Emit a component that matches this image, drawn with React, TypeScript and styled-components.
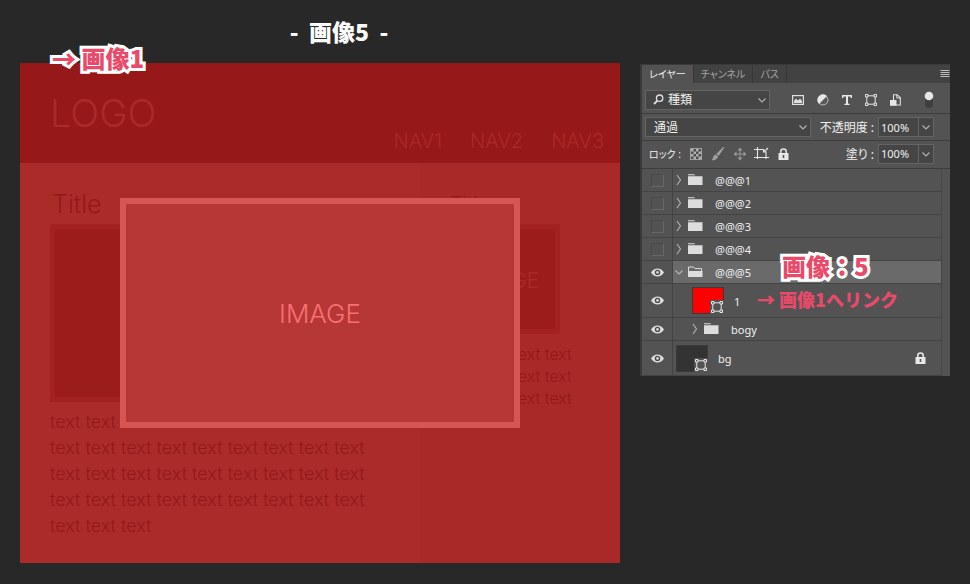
import React from "react";
import styled, { createGlobalStyle } from "styled-components";

const jp = `"Noto Sans CJK JP", "Noto Sans", sans-serif`;
const ui = `"Noto Sans", "Noto Sans CJK JP", sans-serif`;

const GlobalStyle = createGlobalStyle`
  *, *::before, *::after { box-sizing: border-box; }
  body { margin: 0; background: #282828; font-family: ${jp}; }
  h1, h2, h3, p, ul { margin: 0; padding: 0; font-weight: inherit; }
  button, input, select { font: inherit; color: inherit; margin: 0; padding: 0; border: 0; background: none; border-radius: 0; }
`;

const Page = styled.div`
  display: grid;
  grid-template-columns: minmax(0, 1fr) 310px;
  column-gap: 20px;
  align-items: start;
  padding: 18px 20px 20px;
`;

const Heading = styled.h1`
  padding-left: 38px;
  margin-bottom: 18px;
  color: #fff;
  font-size: 23px;
  font-weight: 900;
  line-height: 27px;
  text-align: center;
  white-space: pre;
`;

const Note = styled.span<{ $size: number; $outlined?: boolean }>`
  position: absolute;
  z-index: 2;
  color: #ea4a6a;
  font-family: ${jp};
  font-size: ${(p) => p.$size}px;
  font-weight: 900;
  line-height: 26px;
  white-space: pre;
  ${(p) =>
    p.$outlined &&
    `-webkit-text-stroke: 6px #fff; paint-order: stroke fill; stroke-linejoin: round;`}
`;

const BoardNote = styled(Note)`
  left: 32px;
  top: -18px;
`;

const GroupNote = styled(Note)`
  left: 109px;
  top: -8px;
`;

const LinkNote = styled(Note)`
  left: 84px;
  top: 2px;
`;

/* ---------- Artboard ---------- */

const Artboard = styled.section`
  position: relative;
  min-height: 500px;
  background: #ab2b2b;
  color: #951818;
  font-family: Inter, sans-serif;
  font-weight: 300;
  display: flex;
  flex-direction: column;
`;

const BoardHeader = styled.header`
  display: flex;
  justify-content: space-between;
  align-items: flex-end;
  height: 100px;
  padding: 0 16px 0 30px;
  background: #971818;
  color: #aa2929;
`;

const Logo = styled.h2`
  align-self: flex-start;
  padding-top: 20px;
  font-size: 38px;
  line-height: 60px;
`;

const Nav = styled.nav`
  display: flex;
  gap: 28px;
  padding-bottom: 8px;
`;

const NavLink = styled.a`
  color: inherit;
  font-size: 20px;
  line-height: 28px;
  text-decoration: none;
`;

const BoardBody = styled.div`
  display: grid;
  grid-template-columns: minmax(0, 2fr) minmax(0, 1fr);
  flex: 1;
`;

const MainColumn = styled.article`
  padding: 27px 30px 0;
`;

const SideColumn = styled.aside`
  padding: 27px 30px 0;
  background: #a92929;
`;

const Title = styled.h3<{ $small?: boolean }>`
  padding-left: ${(p) => (p.$small ? 0 : 2)}px;
  font-size: ${(p) => (p.$small ? 20 : 25)}px;
  line-height: 28px;
  margin-bottom: 6px;
`;

const Picture = styled.div<{ $w: string; $h: number }>`
  display: grid;
  place-items: center;
  width: ${(p) => p.$w};
  height: ${(p) => p.$h}px;
  padding-top: 2px;
  border: 5px solid #a32121;
  background: #9c1c1c;
  color: #aa2929;
  font-size: 22px;
`;

const MainText = styled.p`
  margin-top: 7px;
  font-size: 18px;
  line-height: 26px;
  white-space: pre;
`;

const SideText = styled.p`
  margin-top: 9px;
  font-size: 16px;
  line-height: 22px;
  white-space: pre;
`;

const Backdrop = styled.div`
  position: absolute;
  inset: 0;
  display: grid;
  place-items: center;
`;

const Modal = styled.div`
  display: grid;
  place-items: center;
  width: 400px;
  height: 230px;
  padding-top: 2px;
  border: 6px solid #d65555;
  background: #b73736;
  color: #f87070;
  font-size: 26px;
  line-height: 30px;
`;

/* ---------- Layers panel ---------- */

const Panel = styled.section`
  margin-top: 46px;
  border: 1px solid #3a3a3a;
  border-width: 1px 0 0 2px;
  background: #535353;
  color: #f0f0f0;
  font-family: ${ui};
  font-size: 11px;
`;

const TabBar = styled.div`
  display: flex;
  height: 18px;
  background: #424242;
`;

const Tab = styled.button<{ $active?: boolean }>`
  height: 18px;
  padding: 0 7px;
  border-right: 1px solid #383838;
  background: ${(p) => (p.$active ? "#535353" : "transparent")};
  color: ${(p) => (p.$active ? "#f0f0f0" : "#a5a5a5")};
  font-family: ${jp};
  font-size: 10px;
  font-feature-settings: "palt";
  line-height: 18px;
`;

const MenuButton = styled.button`
  margin-left: auto;
  width: 10px;
  height: 18px;
  display: grid;
  place-items: center;
`;

const ToolRow = styled.div<{ $h: number; $top?: number; $bottom?: number }>`
  display: flex;
  align-items: center;
  height: ${(p) => p.$h}px;
  padding: ${(p) => p.$top ?? 0}px 16px ${(p) => p.$bottom ?? 0}px 3px;
  border-bottom: 1px solid #3d3d3d;
`;

const SelectBox = styled.div<{ $w: number }>`
  position: relative;
  width: ${(p) => p.$w}px;
  height: 20px;
  border: 1px solid #646464;
  background: #454545;
  display: flex;
  align-items: center;
`;

const Select = styled.select<{ $indent: number }>`
  appearance: none;
  width: 100%;
  height: 18px;
  padding-left: ${(p) => p.$indent}px;
  font-size: 12px;
`;

const SelectGlyph = styled.span<{ $side: "left" | "right" }>`
  position: absolute;
  ${(p) => p.$side}: ${(p) => (p.$side === "left" ? 7 : 1)}px;
  display: flex;
  pointer-events: none;
`;

const FilterGroup = styled.div`
  display: flex;
  align-items: center;
  justify-content: space-between;
  width: 109px;
  margin-left: 22px;
`;

const IconButton = styled.button`
  display: flex;
`;

const LockGroup = styled.div`
  display: grid;
  grid-template-columns: repeat(5, 22px);
  place-items: center;
  margin-left: 4px;
`;

const Pusher = styled.div`
  margin-left: auto;
  display: flex;
  align-items: center;
`;

const FieldLabel = styled.label`
  margin-right: 4px;
  font-size: 12px;
  font-feature-settings: "palt";
  white-space: pre;
`;

const LockLabel = styled.span`
  padding-left: 4px;
  font-size: 10px;
  font-feature-settings: "palt";
`;

const NumberBox = styled.div`
  display: flex;
  width: 56px;
  height: 20px;
  border: 1px solid #646464;
  background: #454545;
`;

const NumberInput = styled.input`
  width: 39px;
  padding-left: 2px;
`;

const NumberArrow = styled.button`
  flex: 1;
  display: grid;
  place-items: center;
  border-left: 1px solid #646464;
`;

const LayerList = styled.ul`
  list-style: none;
  margin: 0 8px 0 1px;
  border-right: 1px solid #474747;
`;

const LayerRow = styled.li<{ $h: number }>`
  display: flex;
  height: ${(p) => p.$h}px;
  border-bottom: 1px solid #434343;
`;

const EyeCell = styled.button`
  display: grid;
  place-items: center;
  flex: none;
  width: 30px;
  border-right: 1px solid #434343;
`;

const EmptyEye = styled.span`
  width: 13px;
  height: 13px;
  margin-left: -1px;
  border: 1px solid #676767;
  border-color: #484848 #676767 #676767 #484848;
`;

const LayerContent = styled.div<{ $depth: number; $selected?: boolean }>`
  position: relative;
  display: flex;
  align-items: center;
  flex: 1;
  padding: 0 15px 0 ${(p) => 3 + p.$depth * 16}px;
  background: ${(p) => (p.$selected ? "#6a6a6a" : "transparent")};
`;

const Disclosure = styled.button`
  display: flex;
  margin: 0 3px 0 -3px;
`;

const LayerName = styled.span<{ $gap: number }>`
  margin-left: ${(p) => p.$gap}px;
  padding-top: 2px;
  line-height: 16px;
`;

const Thumb = styled.span<{ $fill: string }>`
  display: flex;
  justify-content: flex-end;
  align-items: flex-end;
  width: 32px;
  height: 27px;
  background: ${(p) => p.$fill};
  border: 1px solid #3a3a3a;
`;

const ShapeBadge = styled.span`
  display: flex;
  background: #535353;
  padding: 1px;
  margin: 0 -1px -1px 0;
`;

const LockMark = styled.span`
  display: flex;
  margin-left: auto;
`;

/* ---------- Icons ---------- */

const Chevron = ({ open = true }: { open?: boolean }) => (
  <svg width="12" height="12" viewBox="0 0 12 12" fill="none" stroke="#b4b4b4" strokeWidth="1.1">
    <path d={open ? "M2.5 4.5 L6 8 L9.5 4.5" : "M4 1 L7.5 6 L4 11"} />
  </svg>
);

const Folder = ({ open = false }: { open?: boolean }) => (
  <svg width="15" height="12" viewBox="0 0 15 12">
    {open ? (
      <>
        <path d="M0.5 10 V1 H5.5 L7 2.6 H13.5 V5" fill="none" stroke="#ddd" strokeWidth="1" />
        <path d="M0 5 H14.5 V11 H0 Z" fill="#ddd" />
      </>
    ) : (
      <path d="M0 0.3 H6 L7.5 1.3 H0 Z M0 2.2 H14.5 V11 H0 Z" fill="#ddd" />
    )}
  </svg>
);

const Eye = () => (
  <svg width="13" height="9" viewBox="0 0 13 9">
    <path d="M0 4.5 C3 -0.8 10 -0.8 13 4.5 C10 9.8 3 9.8 0 4.5 Z" fill="#dcdcdc" />
    <circle cx="6.5" cy="4.4" r="2.7" fill="#484848" />
    <circle cx="6.5" cy="4.4" r="1.3" fill="#dcdcdc" />
  </svg>
);

const ShapeIcon = () => (
  <svg width="12" height="12" viewBox="0 0 12 12" fill="none" stroke="#e6e6e6">
    <path d="M3 1.8 H9 M3 10.2 H9 M1.8 3 V9 M10.2 3 V9" />
    <path d="M0.5 0.5 H3 V3 H0.5 Z M9 0.5 H11.5 V3 H9 Z M0.5 9 H3 V11.5 H0.5 Z M9 9 H11.5 V11.5 H9 Z" />
  </svg>
);

const LockIcon = () => (
  <svg width="11" height="12" viewBox="0 0 11 12">
    <path d="M2.8 6 V3.4 A2.7 2.5 0 0 1 8.2 3.4 V6" fill="none" stroke="#e8e8e8" strokeWidth="1.5" />
    <path d="M0.5 5 H10.5 V12 H0.5 Z" fill="#e8e8e8" />
    <path d="M4.7 7 H6.3 V10 H4.7 Z" fill="#535353" />
  </svg>
);

const SearchIcon = () => (
  <svg width="11" height="11" viewBox="0 0 11 11" fill="none" stroke="#e0e0e0">
    <circle cx="6.6" cy="4.2" r="3.2" strokeWidth="1.3" />
    <path d="M4.2 6.8 L1 10" strokeWidth="1.8" />
  </svg>
);

const PixelIcon = () => (
  <svg width="12" height="10" viewBox="0 0 12 10">
    <rect x="0.6" y="0.6" width="10.8" height="8.8" fill="none" stroke="#e0e0e0" strokeWidth="1.2" />
    <path d="M2 8 V6 L4 3.5 L6 5.6 L8 3.5 L10 6 V8 Z" fill="#e0e0e0" />
  </svg>
);

const AdjustIcon = () => (
  <svg width="12" height="12" viewBox="0 0 12 12">
    <circle cx="6" cy="6" r="5" fill="#5a5a5a" stroke="#bbb" />
    <path d="M10 2 A5.5 5.5 0 0 0 2 10 Z" fill="#e8e8e8" />
  </svg>
);

const TypeIcon = () => (
  <svg width="10" height="10" viewBox="0 0 10 10">
    <path d="M0 0 H10 V3 H8.8 L8.4 1.6 H6 V8.6 L7.6 9 V10 H2.4 V9 L4 8.6 V1.6 H1.6 L1.2 3 H0 Z" fill="#e6e6e6" />
  </svg>
);

const SmartIcon = () => (
  <svg width="11" height="12" viewBox="0 0 11 12">
    <path d="M3.5 6 V0.7 H7 L10.3 3.6 V11 H6" fill="none" stroke="#e0e0e0" strokeWidth="1.1" />
    <path d="M6.8 0.5 V4 H10.5" fill="none" stroke="#e0e0e0" />
    <path d="M0 6 H6.5 V11.8 H0 Z" fill="#e8e8e8" />
  </svg>
);

const SwitchIcon = () => (
  <svg width="10" height="18" viewBox="0 0 10 18">
    <rect x="0.5" y="1" width="9" height="16.5" rx="4.5" fill="#3e3e3e" stroke="#606060" strokeWidth="0.6" />
    <circle cx="5" cy="5" r="4.3" fill="#e6e6e6" />
  </svg>
);

const CheckerIcon = () => (
  <svg width="12" height="12" viewBox="0 0 12 12">
    <rect x="0.5" y="0.5" width="11" height="11" fill="#4d4d4d" stroke="#a0a0a0" />
    <path d="M1 1h2.5v2.5H1z M6 1h2.5v2.5H6z M3.5 3.5h2.5v2.5H3.5z M8.5 3.5H11v2.5H8.5z M1 6h2.5v2.5H1z M6 6h2.5v2.5H6z M3.5 8.5h2.5V11H3.5z M8.5 8.5H11V11H8.5z" fill="#b0b0b0" />
  </svg>
);

const BrushIcon = () => (
  <svg width="14" height="14" viewBox="0 0 14 14" fill="#a0a0a0">
    <path d="M13.4 0.4 L7.6 9 L5.2 7 L12.2 0 Z" />
    <path d="M4.6 7.6 L7 9.6 C6.4 12.4 3.6 13.8 0.6 13.2 C2.4 12 2 8.4 4.6 7.6 Z" />
  </svg>
);

const MoveIcon = () => (
  <svg width="14" height="14" viewBox="0 0 14 14">
    <path d="M7 2 V12 M2 7 H12" stroke="#999" />
    <path d="M7 0.5 L9.5 3.5 H4.5 Z M7 13.5 L9.5 10.5 H4.5 Z M0.5 7 L3.5 4.5 V9.5 Z M13.5 7 L10.5 4.5 V9.5 Z" fill="#999" />
  </svg>
);

const ArtboardIcon = () => (
  <svg width="15" height="13" viewBox="0 0 15 13" fill="none" stroke="#e6e6e6" strokeWidth="1.1">
    <path d="M3.5 0 V12 M0 2.5 H9.5 L12 5 V12 M0 10.5 H15" />
    <path d="M9.5 2.5 V5 H12 M11.5 3.5 L14 1" />
  </svg>
);

const MenuIcon = () => (
  <svg width="10" height="8" viewBox="0 0 10 8">
    <path d="M0.5 0.5 H9.5 M0.5 2.5 H9.5 M0.5 4.5 H9.5 M0.5 6.5 H9.5" stroke="#bdbdbd" />
  </svg>
);

/* ---------- Composition ---------- */

const words = (n: number) => Array(n).fill("text").join(" ");
const mainCopy = [9, 9, 9, 9, 3].map(words).join("\n");
const sideCopy = [4, 4, 4].map(words).join("\n");

const Visibility = ({ on = false, name }: { on?: boolean; name: string }) => (
  <EyeCell aria-pressed={on} aria-label={name}>
    {on ? <Eye /> : <EmptyEye />}
  </EyeCell>
);

interface GroupProps {
  name: string;
  visible?: boolean;
  open?: boolean;
  depth?: number;
  children?: React.ReactNode;
}

const GroupLayer = ({ name, visible = false, open = false, depth = 0, children }: GroupProps) => (
  <LayerRow $h={23}>
    <Visibility on={visible} name={name} />
    <LayerContent $depth={depth} $selected={open}>
      <Disclosure aria-expanded={open} aria-label={name}>
        <Chevron open={open} />
      </Disclosure>
      <Folder open={open} />
      <LayerName $gap={12}>{name}</LayerName>
      {children}
    </LayerContent>
  </LayerRow>
);

const Percent = ({ id, label }: { id: string; label: string }) => (
  <Pusher>
    <FieldLabel htmlFor={id}>{label}</FieldLabel>
    <NumberBox>
      <NumberInput id={id} defaultValue="100%" />
      <NumberArrow aria-label={label}>
        <Chevron />
      </NumberArrow>
    </NumberBox>
  </Pusher>
);

export default function App() {
  return (
    <>
      <GlobalStyle />
      <Page>
        <div>
          <Heading>{"-  画像5  -"}</Heading>
          <Artboard>
            <BoardNote $size={24} $outlined>→ 画像1</BoardNote>
            <BoardHeader>
              <Logo>LOGO</Logo>
              <Nav>
                {["NAV1", "NAV2", "NAV3"].map((item) => (
                  <NavLink key={item} href="#">{item}</NavLink>
                ))}
              </Nav>
            </BoardHeader>
            <BoardBody>
              <MainColumn>
                <Title>Title</Title>
                <Picture $w="100%" $h={178} />
                <MainText>{mainCopy}</MainText>
              </MainColumn>
              <SideColumn>
                <Title $small>Title</Title>
                <Picture $w="110px" $h={110}>IMAGE</Picture>
                <SideText>{sideCopy}</SideText>
              </SideColumn>
            </BoardBody>
            <Backdrop>
              <Modal>IMAGE</Modal>
            </Backdrop>
          </Artboard>
        </div>

        <Panel>
          <TabBar role="tablist">
            <Tab role="tab" aria-selected $active>レイヤー</Tab>
            <Tab role="tab">チャンネル</Tab>
            <Tab role="tab">パス</Tab>
            <MenuButton aria-label="メニュー"><MenuIcon /></MenuButton>
          </TabBar>
          <ToolRow $h={31} $top={3}>
            <SelectBox $w={125}>
              <SelectGlyph $side="left"><SearchIcon /></SelectGlyph>
              <Select $indent={22} aria-label="種類"><option>種類</option></Select>
              <SelectGlyph $side="right"><Chevron /></SelectGlyph>
            </SelectBox>
            <FilterGroup>
              <IconButton aria-label="ピクセル"><PixelIcon /></IconButton>
              <IconButton aria-label="調整"><AdjustIcon /></IconButton>
              <IconButton aria-label="文字"><TypeIcon /></IconButton>
              <IconButton aria-label="シェイプ"><ShapeIcon /></IconButton>
              <IconButton aria-label="スマート"><SmartIcon /></IconButton>
            </FilterGroup>
            <Pusher>
              <IconButton aria-label="フィルター"><SwitchIcon /></IconButton>
            </Pusher>
          </ToolRow>
          <ToolRow $h={27}>
            <SelectBox $w={166}>
              <Select $indent={8} aria-label="描画モード"><option>通過</option></Select>
              <SelectGlyph $side="right"><Chevron /></SelectGlyph>
            </SelectBox>
            <Percent id="opacity" label="不透明度 :" />
          </ToolRow>
          <ToolRow $h={28} $bottom={2}>
            <LockLabel>ロック :</LockLabel>
            <LockGroup>
              <IconButton aria-label="透明ピクセル"><CheckerIcon /></IconButton>
              <IconButton aria-label="画像ピクセル"><BrushIcon /></IconButton>
              <IconButton aria-label="位置"><MoveIcon /></IconButton>
              <IconButton aria-label="アートボード"><ArtboardIcon /></IconButton>
              <IconButton aria-label="すべて"><LockIcon /></IconButton>
            </LockGroup>
            <Percent id="fill" label="塗り :" />
          </ToolRow>
          <LayerList>
            {["@@@1", "@@@2", "@@@3", "@@@4"].map((name) => (
              <GroupLayer key={name} name={name} />
            ))}
            <GroupLayer name="@@@5" visible open>
              <GroupNote $size={24} $outlined>画像：5</GroupNote>
            </GroupLayer>
            <LayerRow $h={34}>
              <Visibility on name="1" />
              <LayerContent $depth={1}>
                <Thumb $fill="#ff0000"><ShapeBadge><ShapeIcon /></ShapeBadge></Thumb>
                <LayerName $gap={10}>1</LayerName>
                <LinkNote $size={18}>→ 画像1へリンク</LinkNote>
              </LayerContent>
            </LayerRow>
            <GroupLayer name="bogy" visible depth={1} />
            <LayerRow $h={35}>
              <Visibility on name="bg" />
              <LayerContent $depth={0}>
                <Thumb $fill="#333"><ShapeBadge><ShapeIcon /></ShapeBadge></Thumb>
                <LayerName $gap={10}>bg</LayerName>
                <LockMark><LockIcon /></LockMark>
              </LayerContent>
            </LayerRow>
          </LayerList>
        </Panel>
      </Page>
    </>
  );
}
